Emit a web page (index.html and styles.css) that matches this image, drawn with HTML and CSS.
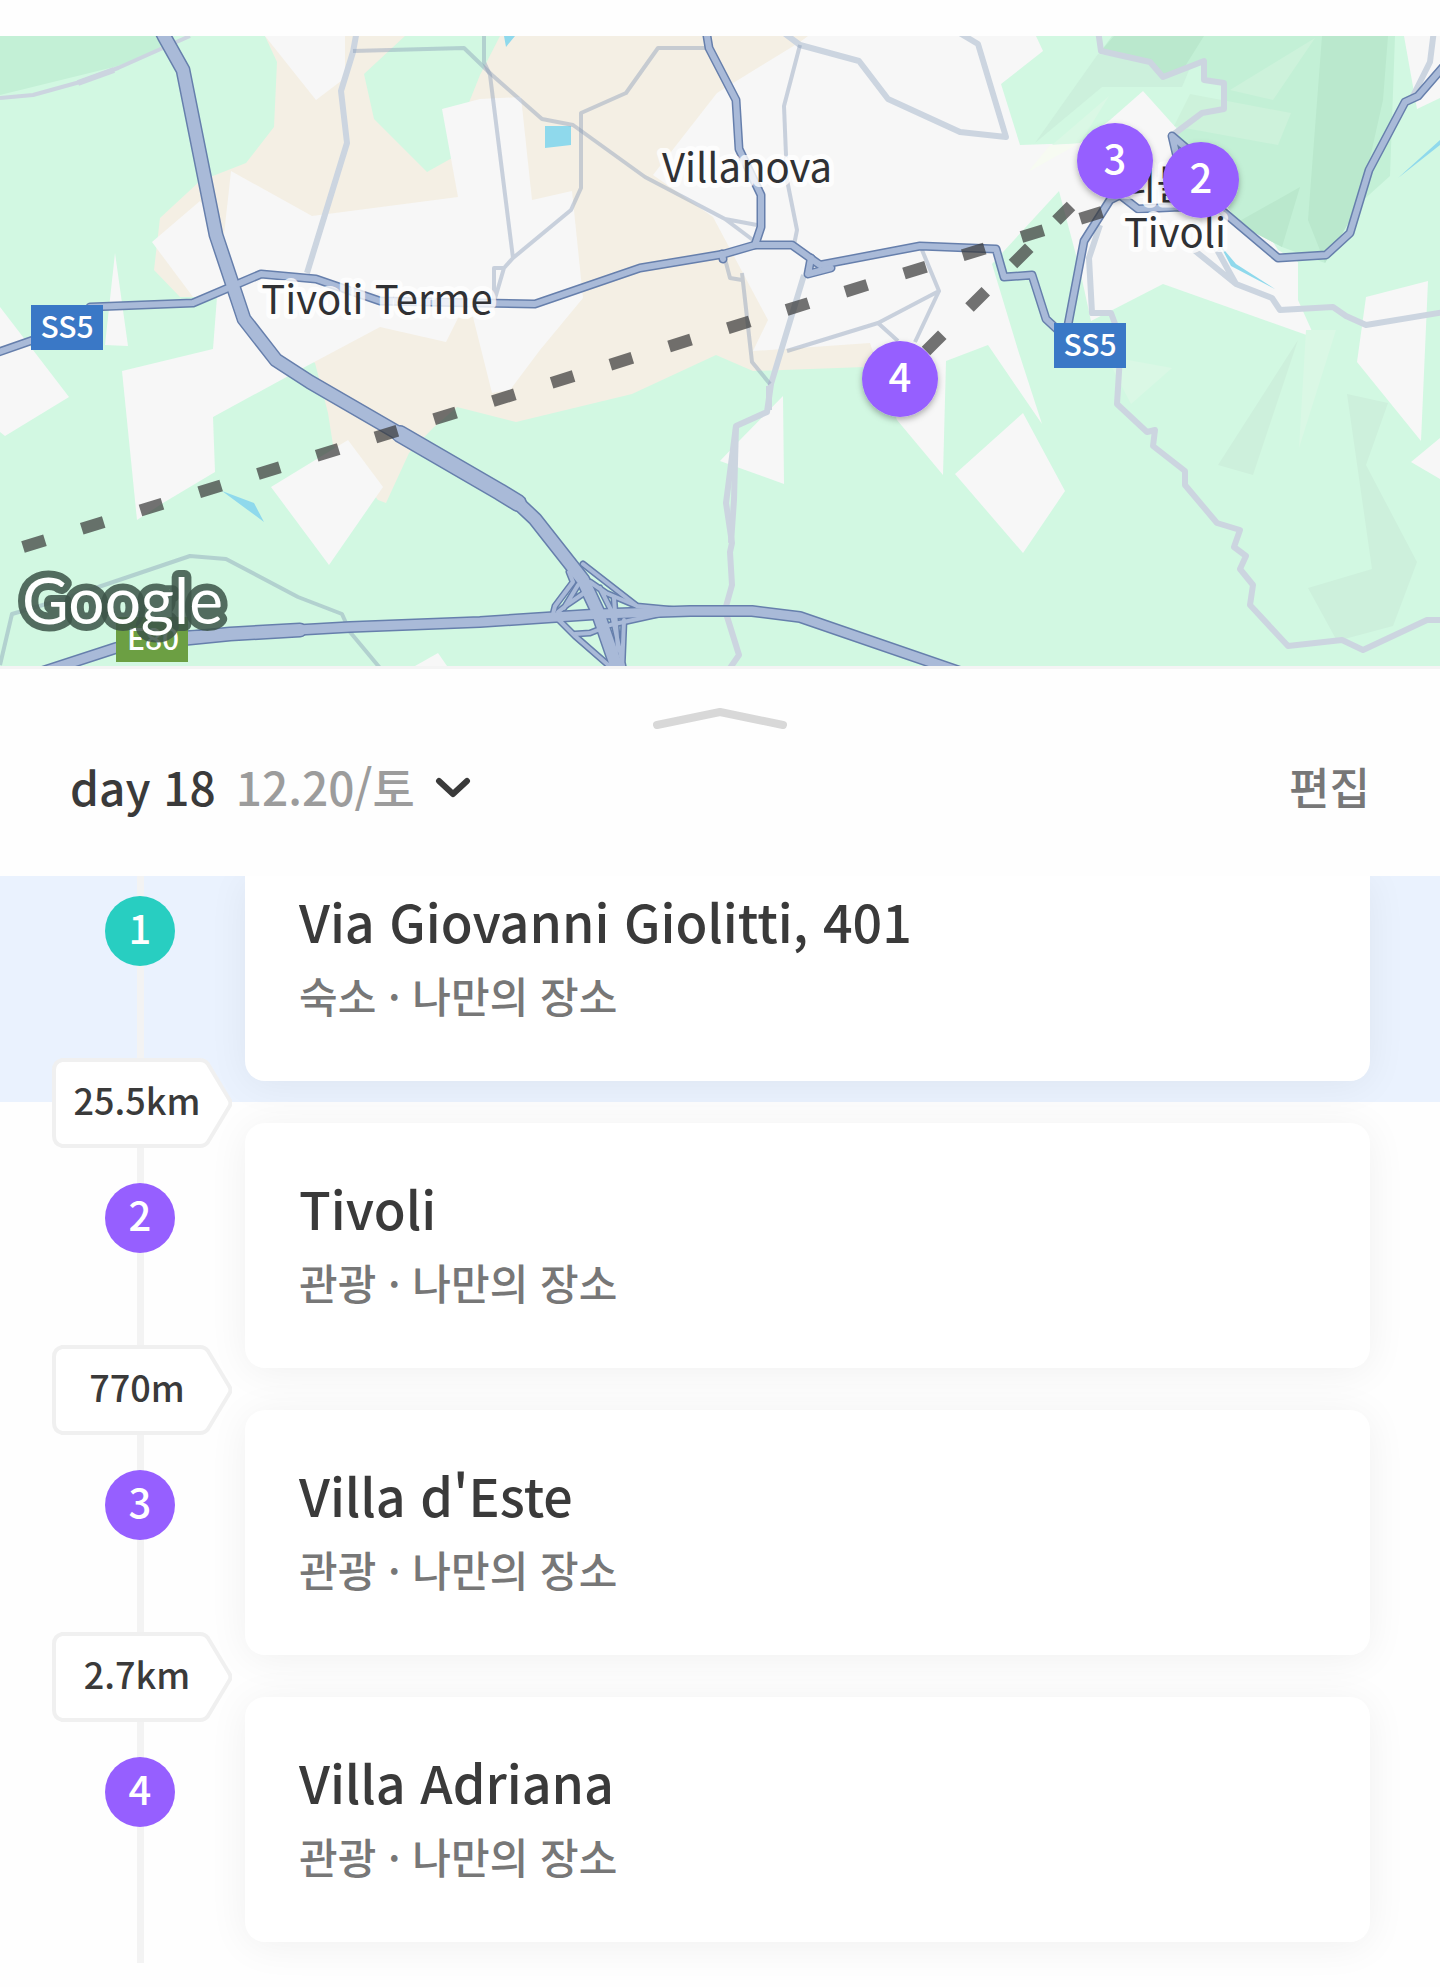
FILE: index.html
```html
<!DOCTYPE html>
<html lang="ko">
<head>
<meta charset="utf-8">
<meta name="viewport" content="width=device-width, initial-scale=1">
<title>day 18</title>
<link rel="stylesheet" href="styles.css">
</head>
<body>
<main class="page">
  <section class="map" aria-label="지도">
    <svg class="map-canvas" viewBox="0 36 1440 630" preserveAspectRatio="xMidYMid slice">
      <defs>
        <filter id="pin-shadow" x="-30%" y="-30%" width="160%" height="160%">
          <feDropShadow dx="0" dy="3" stdDeviation="3" flood-color="#000" flood-opacity=".3"/>
        </filter>
        <path id="motorway" d="M160 28 164 36 183 70 216 235 244 319 276 360 310 382 500 492 518 503 535 519 583 580 597 610 617 668"/>
        <path id="e80" d="M30 676 116 648 190 636 230 634 350 627 480 622 600 614 690 611 752 611 800 617 960 672"/>
        <g id="ss5">
          <path d="M-4 353 36 339"/>
          <path d="M90 307 193 303 261 274 316 279 380 301 480 303 535 304 640 268 724 254 755 245 792 245 820 265 920 246 996 249 1004 277 1032 275 1046 319 1060 332"/>
          <path d="M811 258 808 274 831 268M722 254 723 259"/>
          <path d="M706 30 709 48 736 100 739 149 761 195 761 227 755 245"/>
          <path d="M1068 325 1084 241 1110 200 1120 195 1138 209 1180 207 1220 209 1278 258 1326 255 1350 233 1369 170 1405 102 1418 96 1444 66"/>
          <path d="M1180 170 1172 136 1200 160"/>
        </g>
        <g id="ramps">
          <path d="M583 564 637 606 700 612M569 572 573 582 555 606 553 614 575 636 614 670"/>
          <path d="M575 634 590 633 610 625 660 614M590 589 568 604 558 612M578 585 564 608"/>
          <path d="M590 582 606 593 637 606M600 588 611 610 624 670M614 598 616 625 618 650M624 620 622 670"/>
        </g>
      </defs>

      <rect y="36" width="1440" height="630" fill="#d2f8e2"/>
      <path fill="#c3f0d6" d="M0 36H157L165 48 118 66 0 95z"/>

      <!-- built-up areas -->
      <path fill="#f4efe4" d="M265 36 277 62 274 127 246 163 200 181 160 218 154 270 180 297 217 297 315 363 328 413 333 445 378 500 386 503 409 453 433 428 457 407 516 422 632 394 716 355 753 371 865 367 900 330 810 36z"/>
      <path fill="#d2f8e2" d="M405 36 364 74 374 119 427 172 452 158 470 100 480 75 500 36z"/>
      <g fill="#f7f7f7">
        <path d="M152 242 200 201 224 235 231 171 312 216 458 197 442 109 480 99 521 97 532 200 572 191 583 298 540 350 510 390 492 393 473 317 458 318 446 342 380 327 303 368 213 417 215 472 163 503 137 520 122 371 213 349 217 297 193 297z"/>
        <path d="M653 175 717 93 800 42 808 36H1036L1043 51 1001 84 1020 145 1080 143 1110 120 1143 91 1187 140 1240 190 1278 250 1298 262V300L1315 338 1163 284 1091 321 1080 270 1059 191 992 264 1018 350 1042 424 988 345 946 361 943 475 897 420 870 343 753 351 768 320 713 217z"/>
        <path d="M265 36H345V78L316 100zM0 307 69 397 5 436 0 432zM115 253 105 345 128 346zM348 440 383 487 329 565 271 487zM783 396 784 484 720 461 738 442zM1023 413 1065 491 1023 553 955 474z"/>
        <path d="M1366 297 1428 281 1421 441 1357 362zM1440 438 1411 462 1440 479zM1404 36H1440V98L1417 109zM415 666 438 653 447 666z"/>
      </g>

      <!-- terrain shading -->
      <path fill="#c3f0d6" d="M1112 36H1395L1390 176 1360 203 1325 263 1282 247 1240 225 1187 150 1176 134 1224 109V82L1204 80V61L1163 77 1150 62 1101 51z"/>
      <path fill="#bae8cd" d="M1322 36H1388L1383 100 1360 203 1325 263 1308 220zM1114 36H1204L1184 68 1163 77 1150 62 1101 51zM1236 223 1300 187 1282 247z"/>
      <path fill="#cdf2db" d="M1230 90 1315 38 1273 100zM1190 94 1291 113 1278 145 1174 126z"/>
      <path fill="#ccf0dc" d="M1098 54 1150 62 1163 77 1190 68 1182 87H1102L1035 143z"/>
      <path fill="#daf8e5" d="M1109 96 1080 143 1052 145zM1306 330 1336 330 1299 448zM1106 356 1172 368 1131 404z"/>
      <path fill="#f7fbf2" d="M1050 145 1078 144 1028 172z"/>
      <path fill="#cdf0dc" d="M1298 340 1253 475 1218 465zM1347 394 1388 403 1366 465 1417 562 1393 626 1337 641 1308 588 1372 569z"/>

      <g fill="#8fd9ec">
        <path d="M545 126H571V145L545 148zM504 36H515L506 47zM222 491 254 503 264 522zM1220 245 1236 264 1275 289 1231 266zM1398 178 1440 140V145z"/>
      </g>

      <!-- minor roads -->
      <g class="road-minor">
        <path stroke-width="4" d="M0 98 33 95 80 82 118 68 190 36"/>
        <path d="M78 83 114 70"/>
        <path d="M357 30 353 52 341 91 347 143 307 273"/>
        <path d="M780 30 800 45 859 61 888 99 960 132 1006 137 978 44 958 32"/>
        <path d="M804 275 771 384 767 412 736 426 726 503 732 543 730 552 732 585 725 610 739 655 730 668"/>
        <path d="M736 426 734 500 731 543M769 386V410"/>
        <path d="M1098 30 1101 51 1150 62 1163 77 1204 61V80L1224 83V109L1202 113 1174 134M1434 30 1430 62 1412 98"/>
        <path d="M1100 225 1089 258 1092 313H1111L1121 340 1117 404 1147 432 1155 430 1153 446 1185 471V485L1217 523 1240 530 1234 547 1246 556 1240 569 1253 585 1250 605 1288 646 1342 640 1363 650 1427 620H1444"/>
        <path d="M1194 250 1236 284 1272 298 1280 310 1333 307 1346 316 1366 325 1444 312M1216 248 1236 284"/>
      </g>
      <g class="road-lane">
        <path d="M353 51 464 48 492 75 542 119 573 125 645 177 725 219 753 240M725 219 757 225"/>
        <path d="M484 30V62L490 75 513 258 504 268H494V302L504 268M513 258 571 210 581 188V113L626 93 658 48H706"/>
        <path d="M800 45 784 106 787 180 797 230 794 245M724 255 730 278 742 280M742 273 752 362 770 384"/>
        <path d="M787 351 878 323 939 291 922 250M939 291 915 342M878 323 898 341"/>
        <path d="M0 665 12 614 60 600 125 578 190 556 226 559 298 597 342 614 350 632 380 668"/>
      </g>

      <!-- major roads: casing, then fill -->
      <g class="casing">
        <use href="#ss5" stroke-width="9"/>
        <use href="#ramps" stroke-width="7"/>
        <use href="#e80" stroke-width="12"/>
        <path d="M170 640 230 634 300 630" stroke-width="15"/>
        <use href="#motorway" stroke-width="15"/>
        <path d="M400 434 500 492 518 503" stroke-width="18"/>
      </g>
      <g class="carriageway">
        <use href="#ss5" stroke-width="6"/>
        <use href="#ramps" stroke-width="4"/>
        <use href="#e80" stroke-width="9"/>
        <path d="M170 640 230 634 300 630" stroke-width="12"/>
        <use href="#motorway" stroke-width="12"/>
        <path d="M400 434 500 492 518 503" stroke-width="15"/>
      </g>

      <g class="place">
        <text x="747" y="182">Villanova</text>
        <text x="377" y="314">Tivoli Terme</text>
        <text x="1175" y="199">티볼리</text>
        <text x="1175" y="247">Tivoli</text>
      </g>

      <g class="shield">
        <rect x="31" y="305" width="72" height="45" fill="#3a78c6"/>
        <text x="67" y="338">SS5</text>
        <rect x="1054" y="323" width="72" height="45" fill="#3a78c6"/>
        <text x="1090" y="356">SS5</text>
        <rect x="116" y="617" width="72" height="45" fill="#6c9f43"/>
        <text x="153" y="650">E80</text>
      </g>

      <g class="route">
        <path d="M23 547 1102 212"/>
        <path d="M926 351 1071 206"/>
      </g>

      <text class="google" x="22" y="624">Google</text>

      <g class="pin">
        <circle cx="900" cy="379" r="38"/><text x="900" y="392">4</text>
        <circle cx="1115" cy="161" r="38"/><text x="1115" y="174">3</text>
        <circle cx="1201" cy="180" r="38"/><text x="1201" y="193">2</text>
      </g>
    </svg>
  </section>

  <section class="sheet">
    <button class="handle" type="button" aria-label="목록 펼치기">
      <svg width="136" height="22" viewBox="0 0 136 22"><path d="M5 18 68 5 131 18"/></svg>
    </button>
    <header class="day-bar">
      <button class="day-select" type="button">
        <span>day 18</span>
        <span class="day-date">12.20/토</span>
        <svg width="36" height="24" viewBox="0 0 36 24"><path d="M4 7 18 20 32 7"/></svg>
      </button>
      <button class="edit" type="button">편집</button>
    </header>

    <ol class="stops">
      <li class="stop stop-lodging">
        <div class="rail"><span class="badge">1</span></div>
        <article class="card">
          <h2 class="card-title">Via Giovanni Giolitti, 401</h2>
          <p class="card-meta">숙소 · 나만의 장소</p>
        </article>
        <div class="distance"><svg viewBox="0 0 180 90"><path d="M10 2H148Q153 2 156 6L177 41Q180 45 177 49L156 84Q153 88 148 88H10Q2 86 2 78V12Q2 4 10 2z"/></svg><span>25.5km</span></div>
      </li>
      <li class="stop">
        <div class="rail"><span class="badge">2</span></div>
        <article class="card">
          <h2 class="card-title">Tivoli</h2>
          <p class="card-meta">관광 · 나만의 장소</p>
        </article>
        <div class="distance"><svg viewBox="0 0 180 90"><path d="M10 2H148Q153 2 156 6L177 41Q180 45 177 49L156 84Q153 88 148 88H10Q2 86 2 78V12Q2 4 10 2z"/></svg><span>770m</span></div>
      </li>
      <li class="stop">
        <div class="rail"><span class="badge">3</span></div>
        <article class="card">
          <h2 class="card-title">Villa d'Este</h2>
          <p class="card-meta">관광 · 나만의 장소</p>
        </article>
        <div class="distance"><svg viewBox="0 0 180 90"><path d="M10 2H148Q153 2 156 6L177 41Q180 45 177 49L156 84Q153 88 148 88H10Q2 86 2 78V12Q2 4 10 2z"/></svg><span>2.7km</span></div>
      </li>
      <li class="stop">
        <div class="rail"><span class="badge">4</span></div>
        <article class="card">
          <h2 class="card-title">Villa Adriana</h2>
          <p class="card-meta">관광 · 나만의 장소</p>
        </article>
      </li>
    </ol>
  </section>
</main>
</body>
</html>
```
FILE: styles.css
```css
* { box-sizing: border-box; }

body {
  margin: 0;
  background: #fefefe;
  color: #3a3a3a;
  font-family: "Noto Sans CJK KR", "Noto Sans", sans-serif;
  font-weight: 500;
}

button {
  padding: 0;
  border: 0;
  background: none;
  color: inherit;
  font: inherit;
  cursor: pointer;
}

.page { padding-top: 36px; }

/* Map */
.map { border-bottom: 3px solid #f4f4f4; }
.map-canvas { display: block; width: 100%; height: 630px; }

.road-minor { fill: none; stroke: #ccd5e0; stroke-width: 6; stroke-linejoin: round; }
.road-lane { fill: none; stroke: #8295b5; stroke-opacity: .4; stroke-width: 4; stroke-linejoin: round; }
.casing { fill: none; stroke: #667fac; stroke-linejoin: round; stroke-linecap: round; }
.carriageway { fill: none; stroke: #a9bad8; stroke-linejoin: round; stroke-linecap: round; }

.place {
  fill: #303134;
  stroke: #fff;
  stroke-opacity: .8;
  stroke-width: 10;
  stroke-linejoin: round;
  paint-order: stroke;
  font-size: 40px;
  font-weight: 400;
  text-anchor: middle;
}

.shield { fill: #fff; font-size: 30px; text-anchor: middle; }
.route { fill: none; stroke: #383838; stroke-opacity: .7; stroke-width: 12; stroke-dasharray: 23 38.5; }

.google {
  fill: #fff;
  stroke: #3c5448;
  stroke-opacity: .85;
  stroke-width: 14;
  stroke-linejoin: round;
  paint-order: stroke;
  font-family: Lato, sans-serif;
  font-size: 64px;
  font-weight: 400;
}

.pin { fill: #965fff; font-size: 40px; text-anchor: middle; }
.pin circle { filter: url(#pin-shadow); }
.pin text { fill: #fff; }

/* Sheet */
.handle { display: flex; justify-content: center; width: 100%; padding: 38px 0 10px; }
.handle path { fill: none; stroke: #d8d8d8; stroke-width: 8; stroke-linecap: round; stroke-linejoin: round; }

.day-bar {
  display: flex;
  align-items: center;
  justify-content: space-between;
  height: 94px;
  margin-bottom: 43px;
  padding: 0 70px;
}

.day-select { display: flex; align-items: center; gap: 20px; font-size: 46px; line-height: 72px; }
.day-date { color: #9c9c9c; }
.day-select path { fill: none; stroke: #3a3a3a; stroke-width: 6; stroke-linecap: round; stroke-linejoin: round; }
.edit { color: #777; font-size: 44px; line-height: 72px; }

.stops { margin: 0; padding: 0 0 24px; list-style: none; }

.stop {
  position: relative;
  display: grid;
  grid-template-columns: 245px 1fr;
  padding-right: 70px;
}

.rail {
  padding: 81px 0 0 105px;
  background: linear-gradient(#f3f3f3, #f3f3f3) 137px 0 / 7px 100% no-repeat;
}

.badge {
  display: flex;
  align-items: center;
  justify-content: center;
  width: 70px;
  height: 70px;
  padding-bottom: 8px;
  border-radius: 50%;
  background: #965fff;
  color: #fff;
  font-size: 40px;
  line-height: 58px;
}

.card {
  margin: 21px 0;
  padding: 53px 54px 58px;
  border-radius: 20px;
  background: #fff;
  box-shadow: 0 4px 40px rgba(0, 0, 0, .06);
}

.card-title { margin: 0 0 14px; font-size: 52px; font-weight: 500; line-height: 64px; }
.card-meta { margin: 0; color: #777; font-size: 42px; line-height: 56px; }

/* The lodging stop is scrolled partly under the day bar */
.stop-lodging { z-index: 1; background: #eaf2fe; clip-path: inset(0 0 -50px); }
.stop-lodging .rail { padding-top: 20px; }
.stop-lodging .badge { background: #28cec1; }
.stop-lodging .card { margin-top: 0; padding-top: 13px; border-radius: 0 0 20px 20px; }

.distance {
  position: absolute;
  z-index: 1;
  bottom: -46px;
  left: 52px;
  display: flex;
  align-items: center;
  justify-content: center;
  width: 180px;
  height: 90px;
  padding: 0 10px 8px 0;
  font-size: 36px;
  line-height: 58px;
}

.distance svg { position: absolute; inset: 0; }
.distance path { fill: #fff; stroke: #f0f0f0; stroke-width: 4; }
.distance span { position: relative; }
```
